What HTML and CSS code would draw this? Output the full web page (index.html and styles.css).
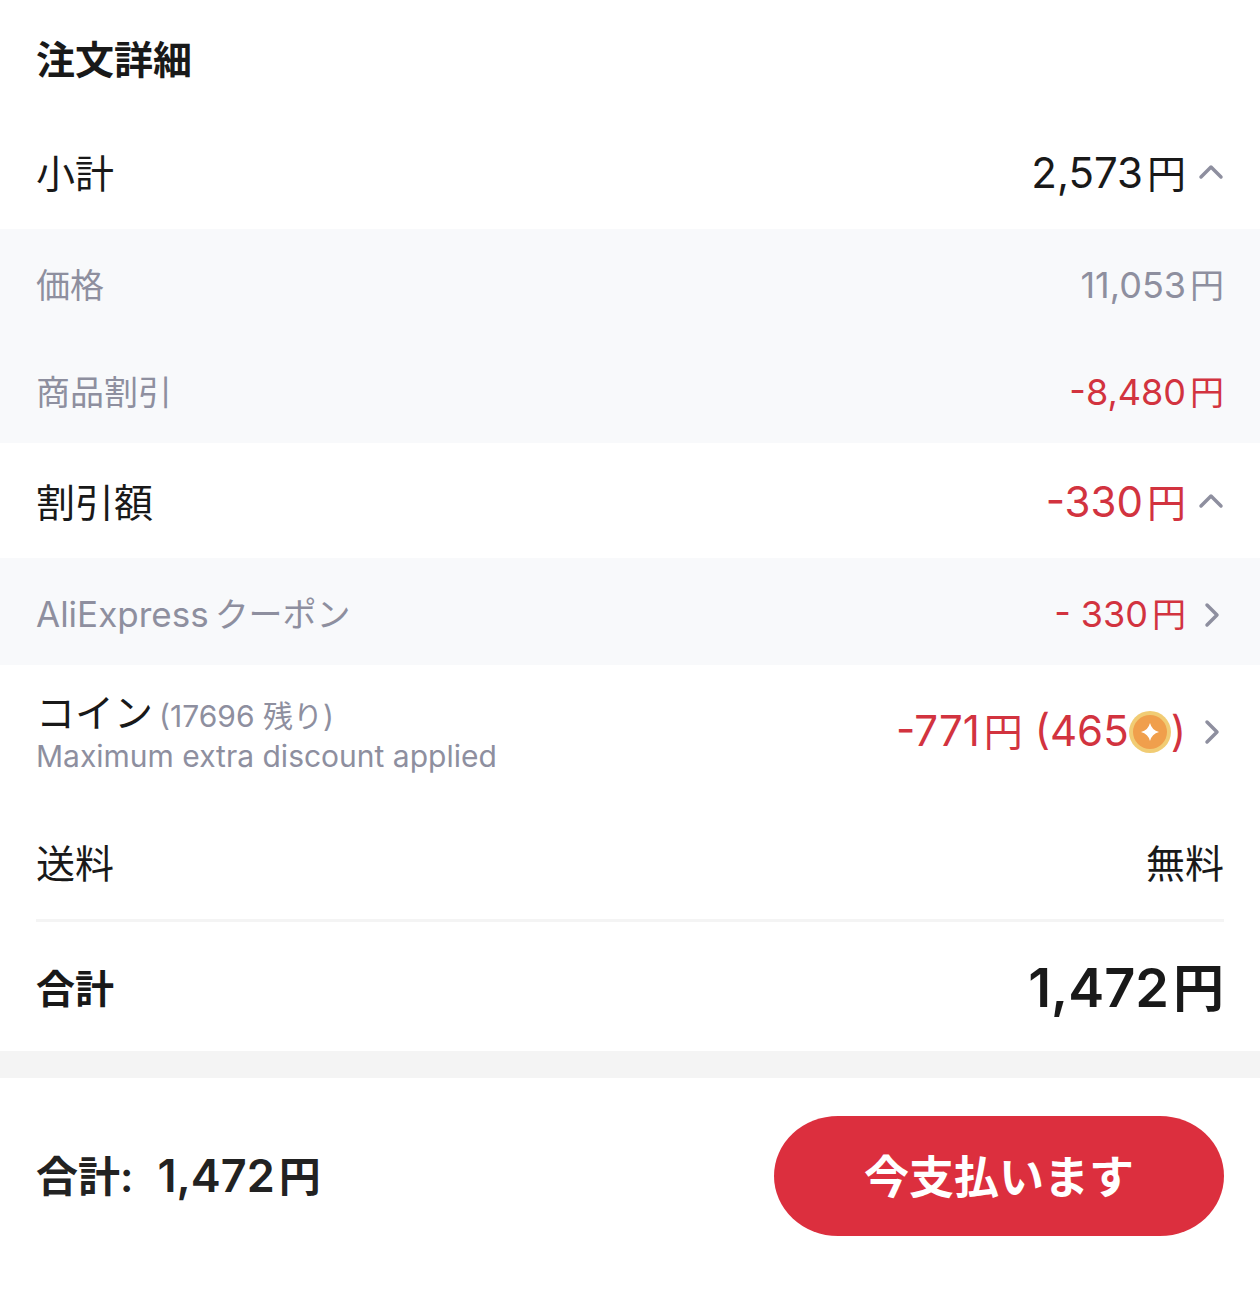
FILE: index.html
```html
<!DOCTYPE html>
<html lang="ja">

<head>
    <meta charset="UTF-8">
    <meta name="viewport" content="width=device-width, initial-scale=1.0">
    <title>注文詳細</title>
    <link rel="stylesheet" href="styles.css">
</head>

<body>
    <main class="order">
        <h1 class="title">注文詳細</h1>

        <div class="row">
            <span class="label">小計</span>
            <button class="value" type="button" aria-expanded="true">
                <span class="price">2,573<span class="yen">円</span></span>
                <svg class="icon" viewBox="0 0 26 32" aria-hidden="true"><path d="M3 19 13 9l10 10" /></svg>
            </button>
        </div>
        <div class="sub">
            <div class="row">
                <span class="label">価格</span>
                <span class="price">11,053<span class="yen">円</span></span>
            </div>
            <div class="row">
                <span class="label">商品割引</span>
                <span class="price red">-8,480<span class="yen">円</span></span>
            </div>
        </div>

        <div class="row">
            <span class="label">割引額</span>
            <button class="value" type="button" aria-expanded="true">
                <span class="price red">-330<span class="yen">円</span></span>
                <svg class="icon" viewBox="0 0 26 32" aria-hidden="true"><path d="M3 19 13 9l10 10" /></svg>
            </button>
        </div>
        <div class="sub">
            <div class="row">
                <span class="label coupon"><span class="latin">AliExpress</span>クーポン</span>
                <button class="value" type="button">
                    <span class="price red">- 330<span class="yen">円</span></span>
                    <svg class="icon" viewBox="0 0 26 32" aria-hidden="true"><path d="M9 6l10 10L9 26" /></svg>
                </button>
            </div>
        </div>

        <div class="row coin-row">
            <div class="coin-text">
                <div class="coin-name"><span class="label">コイン</span><span class="note">(17696 残り)</span></div>
                <div class="note">Maximum extra discount applied</div>
            </div>
            <button class="value" type="button">
                <span class="price red">-771<span class="yen">円</span> (465<svg class="coin" viewBox="0 0 42 42" aria-hidden="true">
                        <circle cx="21" cy="21" r="21" fill="#f1cc74" />
                        <circle cx="21" cy="21" r="17" fill="#f09f4c" />
                        <path d="M21 12q1.800 7.200 9 9-7.200 1.800-9 9-1.800-7.200-9-9 7.200-1.800 9-9z" fill="#fff" />
                    </svg>)</span>
                <svg class="icon" viewBox="0 0 26 32" aria-hidden="true"><path d="M9 6l10 10L9 26" /></svg>
            </button>
        </div>

        <div class="row">
            <span class="label">送料</span>
            <span class="label">無料</span>
        </div>

        <div class="row total">
            <span class="label">合計</span>
            <span class="price">1,472<span class="yen">円</span></span>
        </div>
    </main>

    <footer class="pay">
        <div class="pay-total">
            <span class="label">合計:</span>
            <span class="price">1,472<span class="yen">円</span></span>
        </div>
        <button class="pay-btn" type="button">今支払います</button>
    </footer>
</body>

</html>
```
FILE: styles.css
```css
* {
    box-sizing: border-box;
}

body {
    margin: 0;
    background-color: #fff;
    color: #191919;
    font-family: Inter, "Noto Sans CJK JP", sans-serif;
    font-size: 39px;
    line-height: 48px;
}

button {
    padding: 0;
    border: 0;
    background: none;
    color: inherit;
    font: inherit;
    cursor: pointer;
}

.title {
    margin: 0;
    padding: 36px 36px 30px;
    font-size: 39px;
    font-weight: 700;
}

.row {
    display: flex;
    align-items: center;
    justify-content: space-between;
    min-height: 115px;
    padding: 4px 36px 0;
}

.sub {
    background-color: #f8f9fb;
    color: #8e8f9f;
    font-size: 34px;
}

.sub .row {
    min-height: 107px;
    padding-top: 6px;
}

.value {
    display: flex;
    align-items: center;
    gap: 12px;
}

.price {
    font-size: 42px;
    white-space: nowrap;
}

.sub .price {
    font-size: 36px;
}

.yen {
    margin-left: 4px;
    font-size: 39px;
}

.sub .yen {
    font-size: 34px;
}

.coupon {
    display: flex;
    align-items: baseline;
    gap: 6px;
}

.latin {
    font-size: 35px;
}

.red {
    color: #d2333f;
}

.icon {
    width: 26px;
    height: 32px;
    fill: none;
    stroke: #8e8f9f;
    stroke-width: 3.5;
    stroke-linecap: round;
    stroke-linejoin: round;
}

.coin-row {
    min-height: 139px;
    padding-bottom: 10px;
}

.coin-name {
    display: flex;
    align-items: baseline;
    gap: 6px;
}

.coin-text .note {
    color: #8e8f9f;
    font-size: 30px;
    line-height: 38px;
}

.coin {
    width: 42px;
    height: 42px;
    vertical-align: -7px;
}

.total {
    min-height: 132px;
    margin: 0 36px;
    padding: 4px 0 0;
    border-top: 3px solid #f4f4f4;
    font-weight: 600;
}

.total .price {
    font-size: 54px;
}

.total .yen {
    font-size: 51px;
}

.pay {
    display: flex;
    align-items: center;
    justify-content: space-between;
    padding: 38px 36px 63px;
    border-top: 27px solid #f4f4f4;
    color: #222;
    font-weight: 600;
}

.pay-total {
    display: flex;
    align-items: baseline;
    gap: 24px;
    font-size: 42px;
}

.pay-total .price {
    font-size: 45px;
}

.pay-total .yen {
    font-size: 42px;
}

.pay-btn {
    width: 450px;
    height: 120px;
    padding-top: 4px;
    border-radius: 64px / 60px;
    background-color: #dc2f3e;
    color: #fff;
    font-size: 45px;
}
```
